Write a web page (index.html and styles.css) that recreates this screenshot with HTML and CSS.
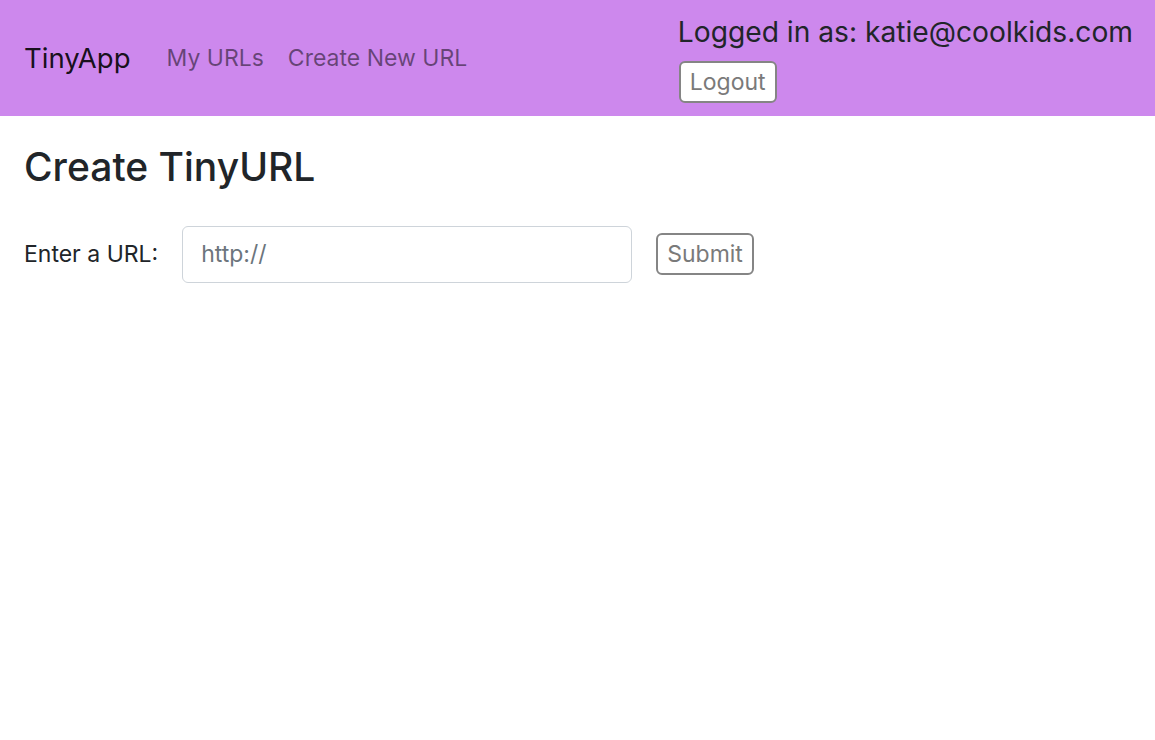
FILE: index.html
```html
<!DOCTYPE html>
<html lang="en">
<head>
<meta charset="utf-8">
<title>TinyApp</title>
<link rel="stylesheet" href="styles.css">
</head>
<body>
<nav class="navbar">
  <a class="brand" href="#">TinyApp</a>
  <div class="nav-links">
    <a class="nav-link" href="#">My URLs</a>
    <a class="nav-link" href="#">Create New URL</a>
  </div>
  <div class="user">
    <div class="user-text">Logged in as: katie@coolkids.com</div>
    <button class="btn" type="button">Logout</button>
  </div>
</nav>
<main class="main">
  <h2 class="title">Create TinyURL</h2>
  <form class="url-form">
    <label class="label" for="longURL">Enter a URL:</label>
    <input class="input" id="longURL" type="text" placeholder="http://">
    <button class="btn" type="submit">Submit</button>
  </form>
</main>
</body>
</html>
```
FILE: styles.css
```css
* { box-sizing: border-box; }
html, body { margin: 0; padding: 0; }
body {
  font-family: Inter, "Noto Sans", "Liberation Sans", sans-serif;
  color: #212529;
  background: #fff;
  font-size: 23px;
}
.navbar {
  background: #cd88ed;
  height: 116px;
  padding: 0 22px 0 24px;
  display: flex;
  align-items: center;
}
.brand {
  font-size: 27.5px;
  color: rgba(0,0,0,0.9);
  text-decoration: none;
  margin-right: 36px;
}
.nav-links { display: flex; gap: 24px; }
.nav-link {
  font-size: 23px;
  color: rgba(0,0,0,0.5);
  text-decoration: none;
}
.user {
  margin-left: auto;
  display: flex;
  flex-direction: column;
  align-items: flex-start;
  gap: 12px;
  padding-top: 6px;
}
.user-text {
  font-size: 28.2px;
  color: #212529;
  line-height: 34px;
  margin-top: -4px;
}
.btn {
  font-family: inherit;
  font-size: 23px;
  color: #7a7a7a;
  background: #fff;
  border: 2px solid #858585;
  border-radius: 6px;
  padding: 0 9px;
  height: 42px;
  line-height: 36px;
  margin-left: 1px;
}
.main { padding: 22px 24px; }
.title {
  font-size: 39px;
  font-weight: 500;
  margin: 6px 0 0;
  line-height: 1.2;
}
.url-form {
  display: flex;
  align-items: center;
  margin-top: 35px;
}
.label { margin-right: 24px; }
.input {
  width: 450px;
  height: 57px;
  border: 1px solid #ced4da;
  border-radius: 6px;
  font-family: inherit;
  font-size: 23px;
  padding: 0 18px;
  color: #495057;
  margin-right: 24px;
}
.input::placeholder { color: #6c757d; }
.url-form .btn { margin-left: 0; }
```
